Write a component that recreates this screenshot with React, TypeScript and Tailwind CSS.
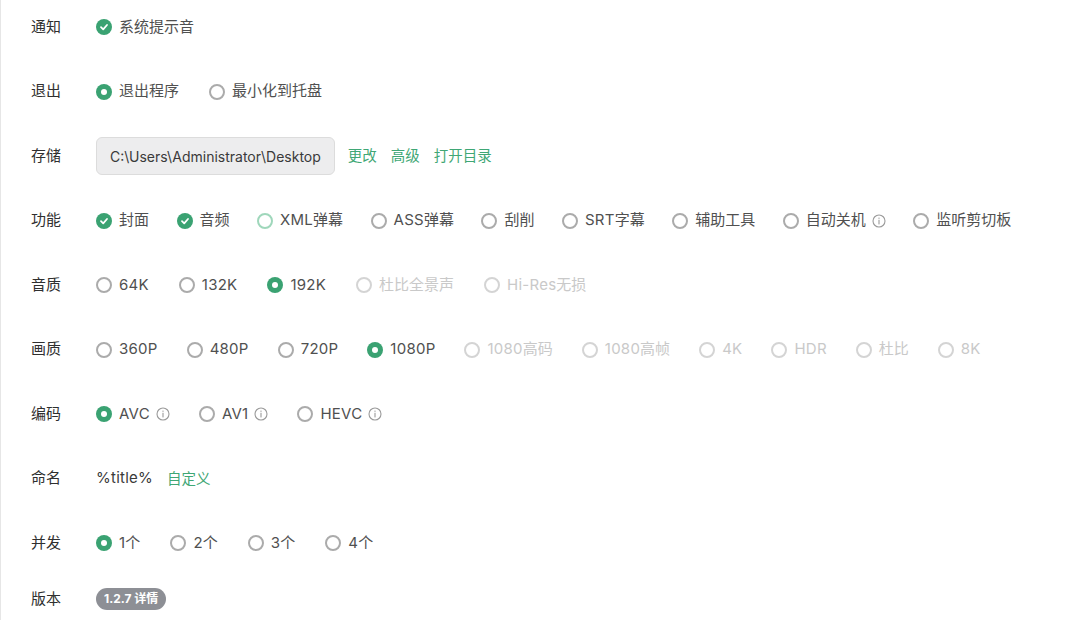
import React from "react";

type Opt = { label: string; state?: "on" | "off" | "dis" | "hover"; info?: boolean };

function Info() {
  return (
    <svg width="14" height="14" viewBox="0 0 14 14" className="ml-[6px] shrink-0">
      <circle cx="7" cy="7" r="6" fill="none" stroke="#9a9a9a" strokeWidth="1.1" />
      <rect x="6.45" y="5.8" width="1.1" height="4.6" fill="#9a9a9a" />
      <rect x="6.45" y="3.6" width="1.1" height="1.2" fill="#9a9a9a" />
    </svg>
  );
}

function Radio({ state = "off" }: { state?: Opt["state"] }) {
  if (state === "on")
    return (
      <span className="w-[16px] h-[16px] rounded-full bg-[#3aa272] flex items-center justify-center shrink-0">
        <span className="w-[6px] h-[6px] rounded-full bg-white" />
      </span>
    );
  const color = state === "dis" ? "#d4d4d4" : state === "hover" ? "#9fd7bb" : "#ababab";
  return <span className="w-[16px] h-[16px] rounded-full border-2 shrink-0" style={{ borderColor: color }} />;
}

function Check() {
  return (
    <span className="w-[16px] h-[16px] rounded-full bg-[#3aa272] flex items-center justify-center shrink-0">
      <svg width="10" height="10" viewBox="0 0 10 10">
        <path d="M2 5.2 L4.2 7.3 L8 3" fill="none" stroke="white" strokeWidth="1.8" strokeLinecap="round" strokeLinejoin="round" />
      </svg>
    </span>
  );
}

function Label({ text }: { text: string }) {
  const parts = text.split(/([\x20-\x7E]+)/).filter(Boolean);
  return (
    <>
      {parts.map((p, i) =>
        /^[\x20-\x7E]+$/.test(p) ? (
          <span key={i} className="tracking-[0.25px]">
            {p}
          </span>
        ) : (
          <span key={i}>{p}</span>
        )
      )}
    </>
  );
}

function Item({ o, check }: { o: Opt; check?: boolean }) {
  const dis = o.state === "dis";
  return (
    <div className="flex items-center">
      {check && o.state === "on" ? <Check /> : <Radio state={o.state} />}
      <span className={`ml-[7px] ${dis ? "text-[#c9c9c9]" : "text-[#505050]"}`}>
        <Label text={o.label} />
      </span>
      {o.info && <Info />}
    </div>
  );
}

function Row({ label, children }: { label: string; children: React.ReactNode }) {
  return (
    <div className="flex items-center h-[40px]">
      <div className="w-[65px] shrink-0 text-[#2f2f2f]">{label}</div>
      <div className="flex items-center">{children}</div>
    </div>
  );
}

function Options({ opts, check, gap = "gap-[30px]" }: { opts: Opt[]; check?: boolean; gap?: string }) {
  return (
    <div className={`flex items-center ${gap}`}>
      {opts.map((o) => (
        <Item key={o.label} o={o} check={check} />
      ))}
    </div>
  );
}

export default function App() {
  return (
    <div
      className="w-[1080px] h-[620px] bg-white border-l border-[#e6e6e6] pl-[30px] pt-[7px] text-[15px] overflow-hidden"
      style={{ fontFamily: 'Inter, "Noto Sans CJK SC", sans-serif' }}
    >
      <div className="flex flex-col gap-[24.5px]">
        <Row label="通知">
          <Options check opts={[{ label: "系统提示音", state: "on" }]} />
        </Row>
        <Row label="退出">
          <Options opts={[{ label: "退出程序", state: "on" }, { label: "最小化到托盘" }]} />
        </Row>
        <Row label="存储">
          <div className="flex items-center">
            <div className="h-[38px] px-[13px] flex items-center bg-[#ededee] border border-[#dcdcdc] rounded-[6px] text-[14px] text-[#3a3a3a]">
              C:\Users\Administrator\Desktop
            </div>
            <div className="flex items-center gap-[14px] ml-[13px] text-[#3fa775] text-[14.5px]">
              <span>更改</span>
              <span>高级</span>
              <span>打开目录</span>
            </div>
          </div>
        </Row>
        <Row label="功能">
          <Options
            check
            gap="gap-[27.5px]"
            opts={[
              { label: "封面", state: "on" },
              { label: "音频", state: "on" },
              { label: "XML弹幕", state: "hover" },
              { label: "ASS弹幕" },
              { label: "刮削" },
              { label: "SRT字幕" },
              { label: "辅助工具" },
              { label: "自动关机", info: true },
              { label: "监听剪切板" },
            ]}
          />
        </Row>
        <Row label="音质">
          <Options
            opts={[
              { label: "64K" },
              { label: "132K" },
              { label: "192K", state: "on" },
              { label: "杜比全景声", state: "dis" },
              { label: "Hi-Res无损", state: "dis" },
            ]}
          />
        </Row>
        <Row label="画质">
          <Options
            gap="gap-[29px]"
            opts={[
              { label: "360P" },
              { label: "480P" },
              { label: "720P" },
              { label: "1080P", state: "on" },
              { label: "1080高码", state: "dis" },
              { label: "1080高帧", state: "dis" },
              { label: "4K", state: "dis" },
              { label: "HDR", state: "dis" },
              { label: "杜比", state: "dis" },
              { label: "8K", state: "dis" },
            ]}
          />
        </Row>
        <Row label="编码">
          <Options
            gap="gap-[29px]"
            opts={[
              { label: "AVC", state: "on", info: true },
              { label: "AV1", info: true },
              { label: "HEVC", info: true },
            ]}
          />
        </Row>
        <Row label="命名">
          <div className="flex items-center">
            <span className="text-[#3a3a3a] tracking-[0.25px]">%title%</span>
            <span className="ml-[14px] text-[#3fa775] text-[14.5px]">自定义</span>
          </div>
        </Row>
        <Row label="并发">
          <Options
            opts={[{ label: "1个", state: "on" }, { label: "2个" }, { label: "3个" }, { label: "4个" }]}
          />
        </Row>
      </div>
      <div className="mt-[16px]">
        <Row label="版本">
          <span className="h-[22px] px-[8px] rounded-full bg-[#8d8f95] text-white text-[12px] font-bold flex items-center">
            1.2.7 详情
          </span>
        </Row>
      </div>
    </div>
  );
}
